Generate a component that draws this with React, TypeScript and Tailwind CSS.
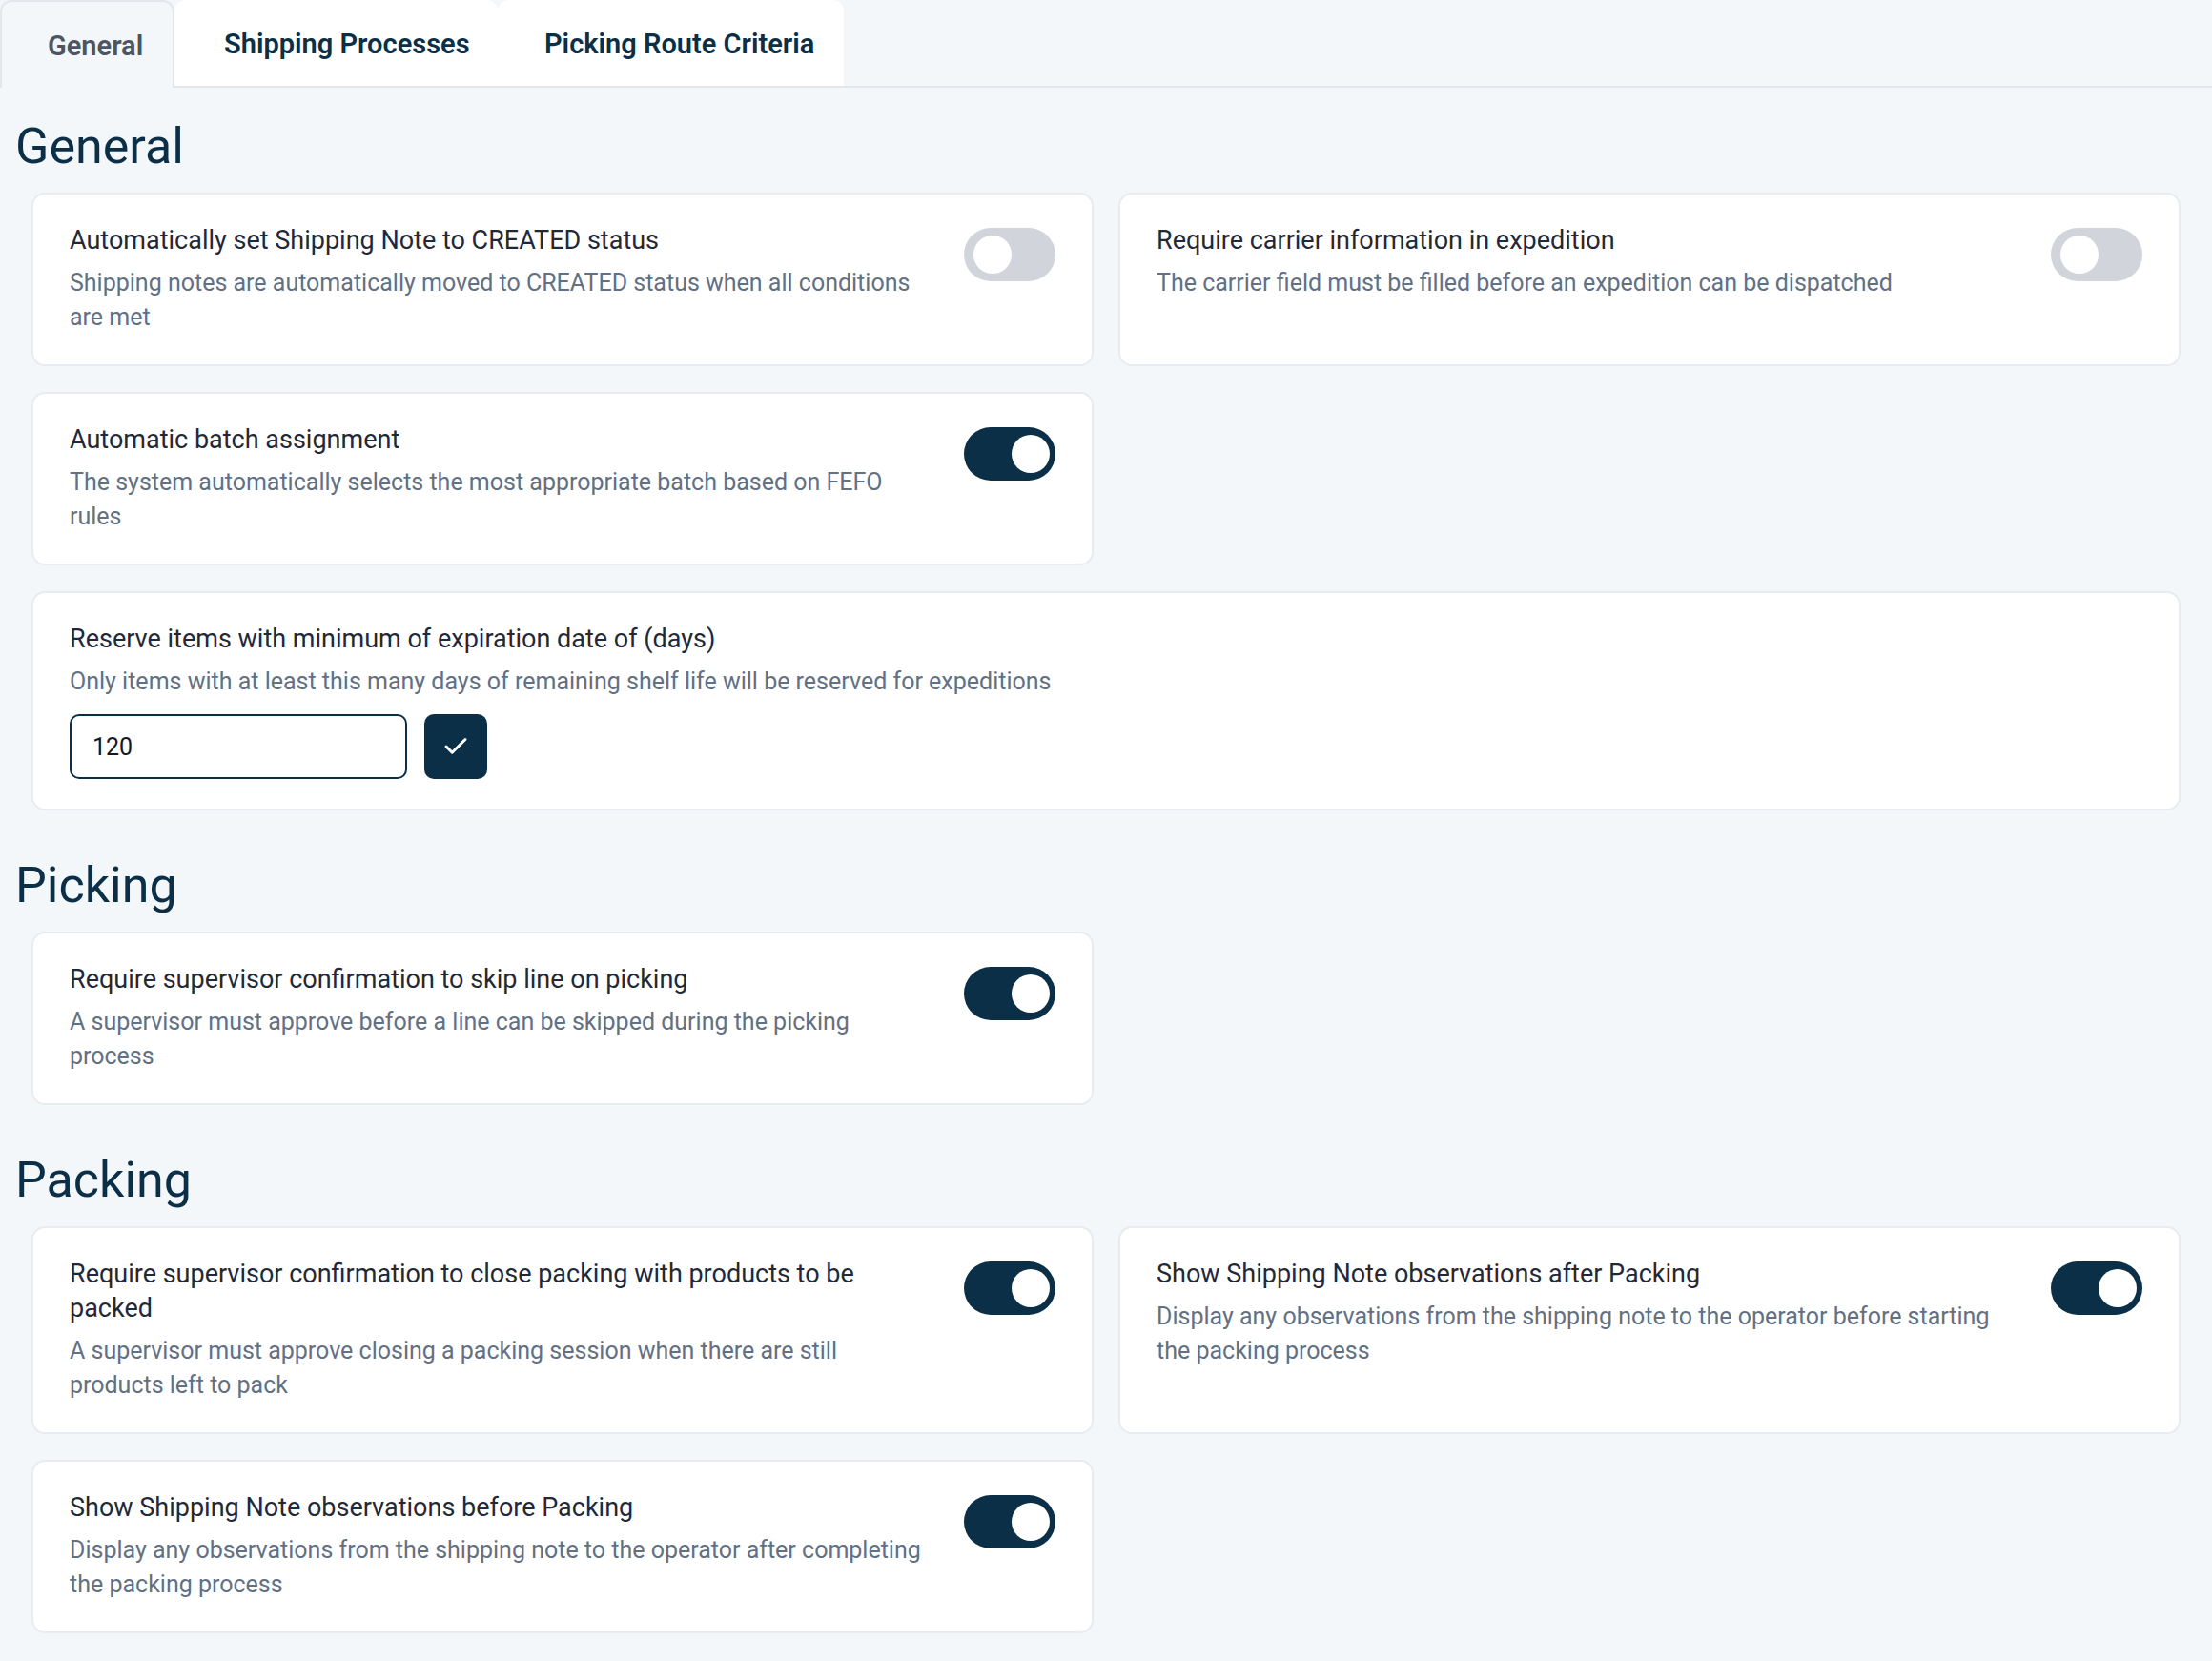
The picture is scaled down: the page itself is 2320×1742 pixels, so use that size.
import { Check } from "lucide-react";

type Setting = {
  title: string;
  description: string;
  enabled: boolean;
};

const general: Setting[] = [
  {
    title: "Automatically set Shipping Note to CREATED status",
    description: "Shipping notes are automatically moved to CREATED status when all conditions are met",
    enabled: false,
  },
  {
    title: "Require carrier information in expedition",
    description: "The carrier field must be filled before an expedition can be dispatched",
    enabled: false,
  },
  {
    title: "Automatic batch assignment",
    description: "The system automatically selects the most appropriate batch based on FEFO rules",
    enabled: true,
  },
];

const picking: Setting[] = [
  {
    title: "Require supervisor confirmation to skip line on picking",
    description: "A supervisor must approve before a line can be skipped during the picking process",
    enabled: true,
  },
];

const packing: Setting[] = [
  {
    title: "Require supervisor confirmation to close packing with products to be packed",
    description: "A supervisor must approve closing a packing session when there are still products left to pack",
    enabled: true,
  },
  {
    title: "Show Shipping Note observations after Packing",
    description: "Display any observations from the shipping note to the operator before starting the packing process",
    enabled: true,
  },
  {
    title: "Show Shipping Note observations before Packing",
    description: "Display any observations from the shipping note to the operator after completing the packing process",
    enabled: true,
  },
];

function Toggle({ on }: { on: boolean }) {
  return (
    <div
      className={
        on
          ? "relative mt-[5px] h-[56px] w-[96px] shrink-0 rounded-full bg-[#0b2f46]"
          : "relative mt-[5px] h-[56px] w-[96px] shrink-0 rounded-full bg-[#d1d5db]"
      }
    >
      <span
        className={
          on
            ? "absolute top-[8px] left-[50px] h-[40px] w-[40px] rounded-full bg-white"
            : "absolute top-[8px] left-[10px] h-[40px] w-[40px] rounded-full bg-white"
        }
      />
    </div>
  );
}

function SettingCard({ setting }: { setting: Setting }) {
  return (
    <div className="flex items-start gap-[36px] rounded-[14px] border-2 border-[#e8ecf0] bg-white px-[38px] pt-[30px] pb-[31px]">
      <div className="flex-1">
        <p className="text-[27px] leading-[36px] text-[#1f2937]">{setting.title}</p>
        <p className="mt-[9px] text-[25px] leading-[36px] text-[#627084]">{setting.description}</p>
      </div>
      <Toggle on={setting.enabled} />
    </div>
  );
}

function Section({ title, first, children }: { title: string; first?: boolean; children: React.ReactNode }) {
  return (
    <section className={first ? "mt-[30px]" : "mt-[47px]"}>
      <h2 className="mb-[16px] text-[52px] leading-[64px] text-[#0b2f46]">{title}</h2>
      <div className="mx-[17px] grid grid-cols-2 gap-x-[26px] gap-y-[27px]">{children}</div>
    </section>
  );
}

export default function App() {
  return (
    <div className="min-h-screen bg-[#f4f7fa] font-['Roboto','Liberation_Sans',sans-serif]">
      <div className="flex h-[92px] border-b-2 border-[#e3e7eb]">
        <div className="-mb-[2px] flex w-[183px] items-center rounded-t-[12px] border-2 border-b-0 border-[#e3e7eb] bg-[#f4f7fa] pt-[3px] pl-[48px] text-[29px] font-semibold text-[#4b5563]">
          General
        </div>
        <div className="flex w-[339px] items-center rounded-t-[12px] bg-white pt-[3px] pl-[52px] text-[29px] font-semibold text-[#0b2f46]">
          Shipping Processes
        </div>
        <div className="flex w-[363px] items-center rounded-t-[12px] bg-white pt-[3px] pl-[49px] text-[29px] font-semibold text-[#0b2f46]">
          Picking Route Criteria
        </div>
      </div>

      <main className="px-[16px] pb-[30px]">
        <Section title="General" first>
          {general.map((s) => (
            <SettingCard key={s.title} setting={s} />
          ))}
          <div className="col-span-2 rounded-[14px] border-2 border-[#e8ecf0] bg-white px-[38px] pt-[30px] pb-[31px]">
            <p className="text-[27px] leading-[36px] text-[#1f2937]">Reserve items with minimum of expiration date of (days)</p>
            <p className="mt-[9px] text-[25px] leading-[36px] text-[#627084]">
              Only items with at least this many days of remaining shelf life will be reserved for expeditions
            </p>
            <div className="mt-[16px] flex gap-[18px]">
              <input
                defaultValue="120"
                className="h-[68px] w-[354px] rounded-[10px] border-2 border-[#0b2f46] px-[22px] text-[25px] text-[#111827] outline-none"
              />
              <button className="flex h-[68px] w-[66px] items-center justify-center rounded-[10px] bg-[#0b2f46] text-white">
                <Check size={30} strokeWidth={2.4} />
              </button>
            </div>
          </div>
        </Section>

        <Section title="Picking">
          {picking.map((s) => (
            <SettingCard key={s.title} setting={s} />
          ))}
        </Section>

        <Section title="Packing">
          {packing.map((s) => (
            <SettingCard key={s.title} setting={s} />
          ))}
        </Section>
      </main>
    </div>
  );
}
